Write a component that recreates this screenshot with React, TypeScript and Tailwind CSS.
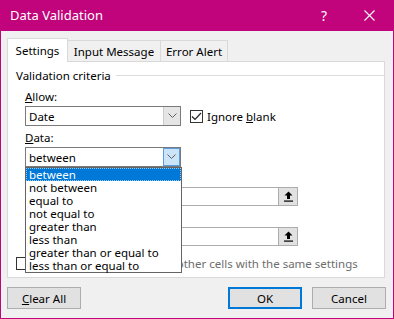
import { ReactNode } from 'react'

const font = { fontFamily: '"Noto Sans", "Segoe UI", sans-serif' }

function Chevron({ color = '#606060' }: { color?: string }) {
  return (
    <svg width="9" height="6" viewBox="0 0 9 6" fill="none">
      <path d="M0.5 0.5 L4.5 4.5 L8.5 0.5" stroke={color} strokeWidth="1" />
    </svg>
  )
}

function Combo({ value, active }: { value: string; active?: boolean }) {
  return (
    <div className="flex h-[20px] w-[156px] border border-[#7a7a7a] bg-white">
      <div className="flex flex-1 items-center pl-[3px] text-black">{value}</div>
      <div
        className={
          active
            ? 'flex w-[17px] items-center justify-center border border-[#569de5] bg-[#cce4f7]'
            : 'flex w-[17px] items-center justify-center border-l border-[#cccccc] bg-[#e5e5e5]'
        }
      >
        <Chevron />
      </div>
    </div>
  )
}

function RefInput() {
  return (
    <div className="flex h-[19px] w-[273px] border border-[#adadad] bg-white">
      <div className="flex-1" />
      <div className="flex w-[19px] items-center justify-center border-l border-[#adadad] bg-[#e1e1e1]">
        <svg width="9" height="11" viewBox="0 0 9 11">
          <path d="M4.5 0.5 L8.5 4.5 L6 4.5 L6 8 L3 8 L3 4.5 L0.5 4.5 Z" fill="#000" />
          <rect x="0" y="9.5" width="9" height="1.2" fill="#000" />
        </svg>
      </div>
    </div>
  )
}

function Check({ checked }: { checked?: boolean }) {
  return (
    <div className="flex h-[13px] w-[13px] items-center justify-center border border-[#333333] bg-white">
      {checked && (
        <svg width="11" height="9" viewBox="0 0 11 9" fill="none">
          <path d="M1 4.5 L4 7.5 L10 1" stroke="#222" strokeWidth="1.2" />
        </svg>
      )}
    </div>
  )
}

function Btn({ children, primary }: { children: ReactNode; primary?: boolean }) {
  return (
    <div
      className={
        primary
          ? 'flex h-[22px] w-[74px] items-center justify-center border-2 border-[#0078d7] bg-[#e1e1e1]'
          : 'flex h-[22px] w-[74px] items-center justify-center border border-[#adadad] bg-[#e1e1e1]'
      }
    >
      {children}
    </div>
  )
}

const options = [
  'between',
  'not between',
  'equal to',
  'not equal to',
  'greater than',
  'less than',
  'greater than or equal to',
  'less than or equal to',
]

export default function App() {
  return (
    <div
      className="flex h-[319px] w-[394px] flex-col border border-t-0 border-[#c1047b] bg-[#f0f0f0] text-[11.5px] leading-[15px] text-black"
      style={font}
    >
      {/* title bar */}
      <div className="-mx-px flex h-[31px] items-center bg-[#c1047b] pl-[10px] text-white">
        <span className="text-[13px]">Data Validation</span>
        <span className="ml-auto mr-[37px] text-[14px]">?</span>
        <svg className="mr-[19px]" width="11" height="11" viewBox="0 0 11 11">
          <path d="M0.5 0.5 L10.5 10.5 M10.5 0.5 L0.5 10.5" stroke="#fff" strokeWidth="1.1" />
        </svg>
      </div>

      {/* tabs */}
      <div className="ml-[6px] mt-[7px] flex items-end">
        <div className="relative z-10 -mb-px flex h-[24px] w-[61px] items-center justify-center border border-b-0 border-[#d9d9d9] bg-white">
          Settings
        </div>
        <div className="flex h-[21px] w-[93px] items-center justify-center border border-b-0 border-l-0 border-[#d9d9d9]">
          Input Message
        </div>
        <div className="flex h-[21px] w-[67px] items-center justify-center border border-b-0 border-l-0 border-[#d9d9d9]">
          Error Alert
        </div>
      </div>

      {/* panel */}
      <div className="relative ml-[6px] flex h-[217px] w-[378px] flex-col border border-[#d9d9d9] bg-white pl-[8px]">
        <div className="mt-[6px] flex items-center">
          <span>Validation criteria</span>
          <div className="ml-[5px] h-px flex-1 bg-[#dcdcdc]" />
        </div>

        <div className="flex flex-col pl-[9px]">
          <div className="mt-[6px]">
            <u>A</u>llow:
          </div>
          <div className="mt-[2px] flex items-center">
            <Combo value="Date" />
            <div className="ml-[9px]">
              <Check checked />
            </div>
            <span className="ml-[4px]">
              Ignore <u>b</u>lank
            </span>
          </div>
          <div className="mt-[4px]">
            <u>D</u>ata:
          </div>
          <div className="mt-[2px]">
            <Combo value="between" active />
          </div>
          <div className="mt-[20px]">
            <RefInput />
          </div>
          <div className="mt-[21px]">
            <RefInput />
          </div>
        </div>

        <div className="mt-[10px] flex items-center">
          <Check />
          <span className="ml-[4px] text-[#6d6d6d]">
            Apply these changes to all other cells with the same settings
          </span>
        </div>

        {/* dropdown list */}
        <div className="absolute left-[17px] top-[105px] z-20 flex w-[157px] flex-col border border-[#646464] bg-white leading-[13px]">
          {options.map((o, i) => (
            <div
              key={o}
              className={
                i === 0
                  ? 'h-[13px] border border-dotted border-[#99c9ef] bg-[#0078d7] pl-[2px] leading-[11px] text-white'
                  : 'h-[13px] pl-[3px]'
              }
            >
              {o}
            </div>
          ))}
        </div>
      </div>

      {/* buttons */}
      <div className="mt-[9px] flex pl-[6px] pr-[7px]">
        <Btn>
          <u>C</u>lear All
        </Btn>
        <div className="ml-auto mr-[10px]">
          <Btn primary>OK</Btn>
        </div>
        <Btn>Cancel</Btn>
      </div>
    </div>
  )
}
